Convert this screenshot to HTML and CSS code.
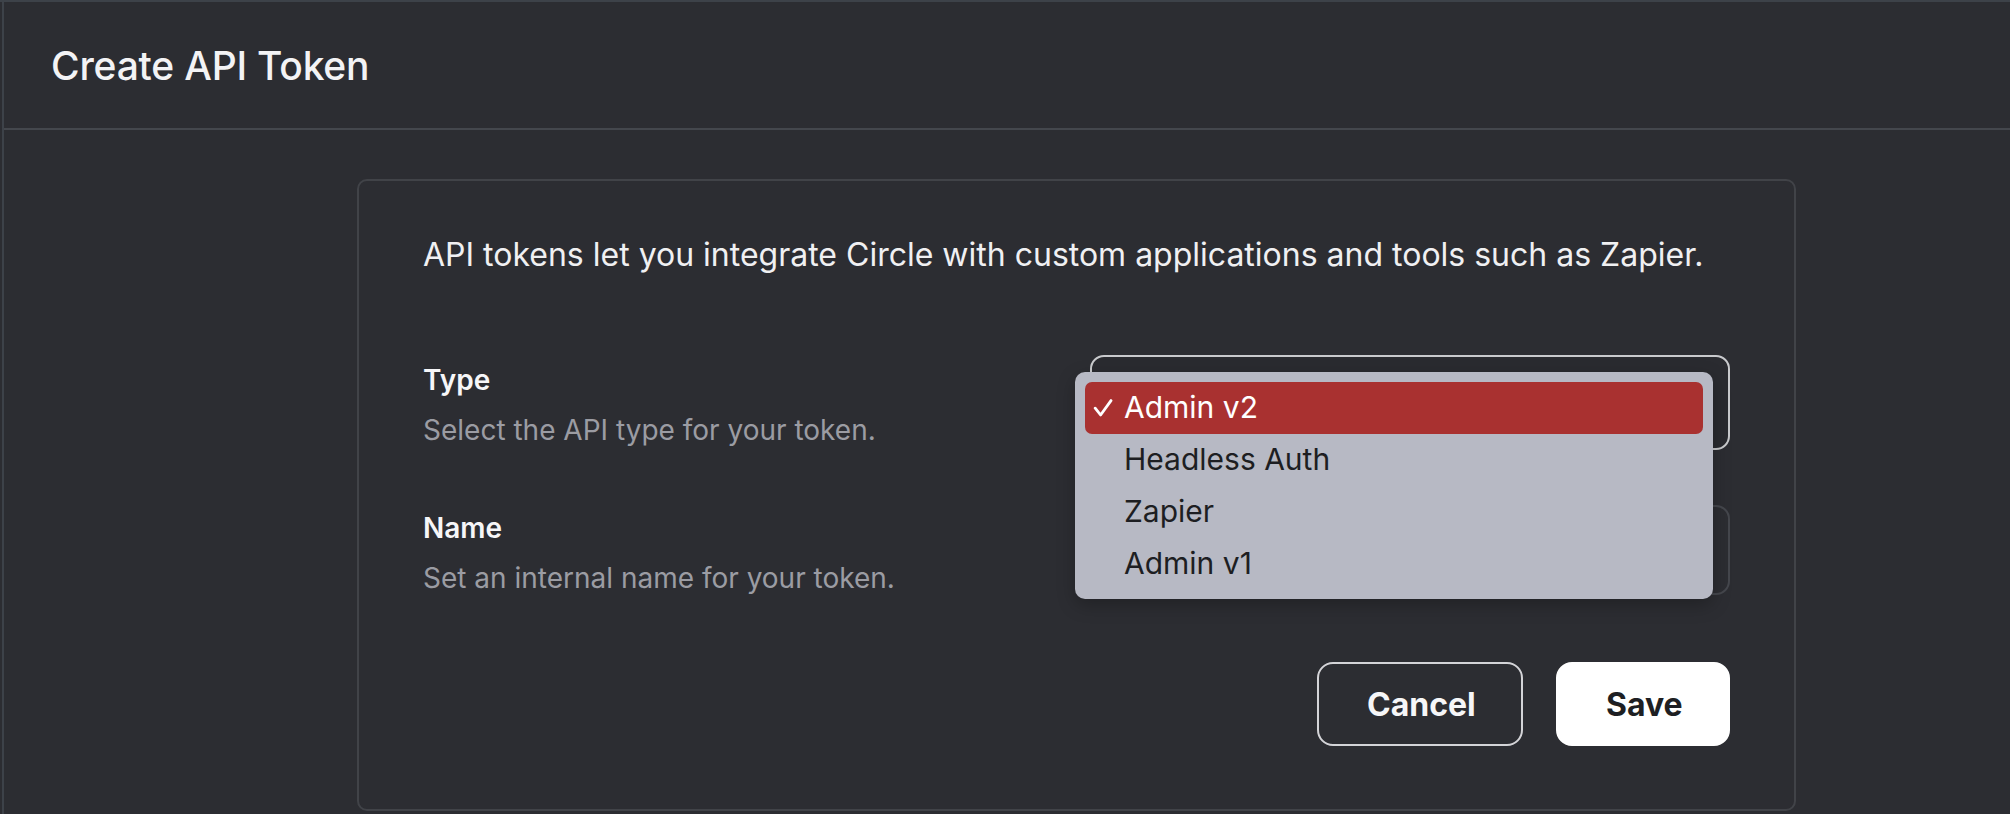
FILE: index.html
```html
<!DOCTYPE html>
<html lang="en">
<head>
<meta charset="utf-8">
<title>Create API Token</title>
<link rel="stylesheet" href="styles.css">
</head>
<body>
<div class="app">
  <div class="shell">
    <header class="header">
      <h1 class="title">Create API Token</h1>
    </header>
    <main class="main">
      <section class="card">
        <p class="intro">API tokens let you integrate Circle with custom applications and tools such as Zapier.</p>
        <div class="form-row row-type">
          <div class="label-block">
            <div class="label">Type</div>
            <div class="hint">Select the API type for your token.</div>
          </div>
          <div class="select">
            <div class="menu">
              <div class="option selected">
                <svg class="check" viewBox="0 0 20 18" width="20" height="18" aria-hidden="true"><path d="M2.2 9.2 L7.6 16 L18 1.6" fill="none" stroke="#fff" stroke-width="2.8" stroke-linecap="round" stroke-linejoin="round"/></svg>
                <span>Admin v2</span>
              </div>
              <div class="option"><span>Headless Auth</span></div>
              <div class="option"><span>Zapier</span></div>
              <div class="option"><span>Admin v1</span></div>
            </div>
          </div>
        </div>
        <div class="form-row row-name">
          <div class="label-block">
            <div class="label">Name</div>
            <div class="hint">Set an internal name for your token.</div>
          </div>
          <div class="input"></div>
        </div>
        <div class="actions">
          <button class="btn btn-cancel" type="button">Cancel</button>
          <button class="btn btn-save" type="button">Save</button>
        </div>
      </section>
    </main>
  </div>
</div>
</body>
</html>
```

FILE: styles.css
```css
* {
  box-sizing: border-box;
}

html, body {
  margin: 0;
  padding: 0;
  background: #2c2d32;
  height: 814px;
  overflow: hidden;
}

body {
  font-family: Inter, "Noto Sans", "Liberation Sans", sans-serif;
  color: #f2f2f4;
}

.app {
  border-top: 2px solid #3d4249;
  height: 814px;
  padding-left: 2px;
}

.shell {
  border-left: 2px solid #3d4249;
  height: 100%;
}

.header {
  height: 128px;
  border-bottom: 2px solid #44474d;
  display: flex;
  align-items: center;
  padding-left: 47px;
}

.title {
  margin: 0;
  font-size: 39px;
  font-weight: 500;
  color: #f3f3f5;
  letter-spacing: -0.2px;
}

.main {
  padding-top: 49px;
  padding-left: 353px;
}

.card {
  width: 1439px;
  height: 632px;
  border: 2px solid #414348;
  border-radius: 10px;
  padding: 50px 64px 0 64px;
}

.intro {
  margin: 0;
  font-size: 32px;
  line-height: 48px;
  color: #f0f0f2;
}

.form-row {
  display: grid;
  grid-template-columns: 1fr 640px;
  align-items: start;
}

.row-type {
  margin-top: 76px;
}

.row-name {
  margin-top: 55px;
}

.label-block {
  display: flex;
  flex-direction: column;
  gap: 10px;
  margin-bottom: -10px;
}

.row-type .label-block {
  margin-top: 5px;
}

.row-name .label-block {
  margin-top: 3px;
}

.label {
  font-size: 28px;
  line-height: 40px;
  font-weight: 600;
  color: #f6f6f8;
}

.hint {
  font-size: 28px;
  line-height: 40px;
  color: #9b9ca3;
}

.select {
  position: relative;
  height: 95px;
  border: 2px solid #c9cacd;
  border-radius: 14px;
  background: #2a2b30;
}

.input {
  height: 90px;
  border: 2px solid #45474d;
  border-radius: 14px;
}

.menu {
  position: absolute;
  left: -17px;
  top: 15px;
  width: 638px;
  padding: 10px 10px 9px 10px;
  background: #b7b9c4;
  border-radius: 10px;
  box-shadow: 0 6px 18px rgba(0, 0, 0, 0.25);
  z-index: 2;
}

.option {
  position: relative;
  height: 52px;
  line-height: 50px;
  padding-left: 39px;
  font-size: 30px;
  color: #1d1e22;
  border-radius: 7px;
}

.option.selected {
  background: #a93130;
  color: #ffffff;
}

.check {
  position: absolute;
  left: 8px;
  top: 17px;
}

.actions {
  display: flex;
  justify-content: flex-end;
  gap: 33px;
  margin-top: 67px;
}

.btn {
  height: 84px;
  border-radius: 16px;
  font-family: Inter, "Noto Sans", "Liberation Sans", sans-serif;
  font-size: 32px;
  font-weight: 700;
  border: 2px solid #d4d4d8;
  padding: 0 48px;
  cursor: pointer;
}

.btn-cancel {
  width: 206px;
  background: transparent;
  color: #f6f6f8;
}

.btn-save {
  width: 174px;
  background: #ffffff;
  border-color: #ffffff;
  color: #1e1f23;
}
```
